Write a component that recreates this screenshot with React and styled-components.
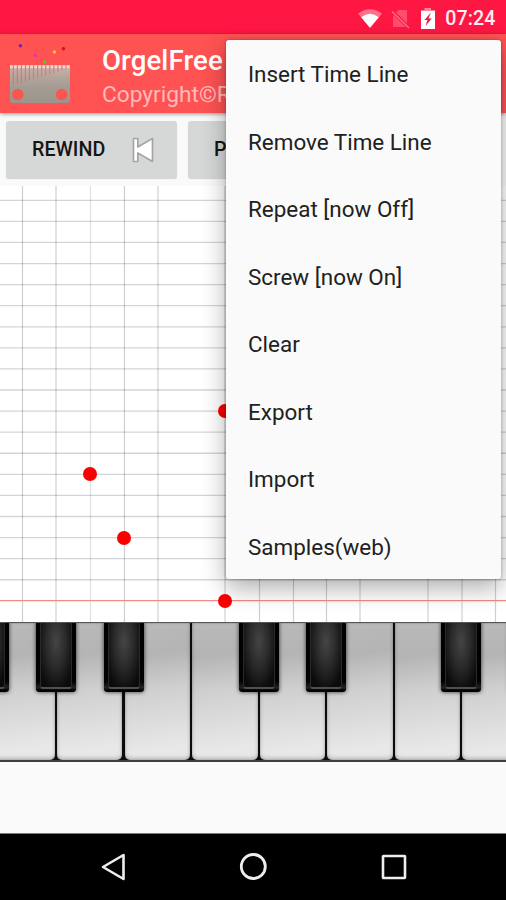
import React from 'react';
import styled, { createGlobalStyle } from 'styled-components';

const GlobalStyle = createGlobalStyle`
  * { box-sizing: border-box; }
  body { margin: 0; background: #fafafa; font-family: Roboto, "Liberation Sans", sans-serif; }
`;

const Screen = styled.div`
  position: relative;
  width: 506px;
  height: 900px;
  overflow: hidden;
  display: flex;
  flex-direction: column;
  background: #fafafa;
`;

const StatusBar = styled.header`
  flex: 0 0 34px;
  height: 34px;
  background: #ff1744;
  display: flex;
  align-items: center;
  justify-content: flex-end;
  padding: 3px 10.5px 0 0;
  color: #ffeef1;
  svg { display: block; }
`;

const StatusIcons = styled.div`
  display: flex;
  align-items: center;
  gap: 9.5px;
  margin-right: 9.5px;
`;

const Clock = styled.span`
  font-size: 19.6px;
  font-weight: 500;
  line-height: 29px;
  letter-spacing: 0.1px;
`;

const AppBar = styled.div`
  flex: 0 0 78.5px;
  background: #ff5252;
  display: flex;
  padding: 0 0 0 9px;
  box-shadow: 0 1px 4px rgba(0, 0, 0, 0.4);
  z-index: 1;
`;

const Logo = styled.svg`
  flex: none;
  display: block;
  width: 62px;
  height: 62px;
  margin-top: 9px;
`;

const Titles = styled.div`
  margin-left: 31px;
  padding-top: 11px;
  white-space: nowrap;
`;

const Title = styled.div`
  font-size: 27.6px;
  font-weight: 500;
  line-height: 32px;
  letter-spacing: 0.1px;
  color: #fff;
`;

const Subtitle = styled.div`
  font-size: 22.7px;
  line-height: 27px;
  margin-top: 4px;
  color: #ffbaba;
`;

const Toolbar = styled.div`
  flex: 0 0 73.5px;
  display: flex;
  gap: 11px;
  padding: 8.5px 6px 8px;
`;

const ToolButton = styled.button`
  flex: 0 0 171px;
  height: 57px;
  border: 0;
  border-radius: 3px;
  background: #d6d7d7;
  box-shadow: 0 1px 1px rgba(0, 0, 0, 0.16);
  display: flex;
  align-items: center;
  justify-content: space-between;
  padding: 1px 23px 0 26px;
  font: 500 19.7px/24px Roboto, "Liberation Sans", sans-serif;
  color: #151515;
  svg { display: block; }
`;

const Roll = styled.div`
  position: relative;
  flex: 0 0 436px;
  background: #fff;
  overflow: hidden;
`;

const GridLines = styled.svg`
  display: block;
  width: 506px;
  height: 436px;
`;

const Note = styled.i`
  position: absolute;
  left: ${p => p.$x - 7}px;
  top: ${p => p.$y - 7}px;
  width: 14px;
  height: 14px;
  border-radius: 50%;
  background: #fa0000;
`;

const Piano = styled.div`
  position: relative;
  flex: 0 0 140px;
  overflow: hidden;
  background: #0c0c0c;
  border-top: 1.5px solid #555;
  border-bottom: 2px solid #3e3e3e;
`;

const WhiteKeys = styled.div`
  display: flex;
  width: 540px;
  height: 100%;
  margin-left: -11.6px;
`;

const WhiteKey = styled.div`
  flex: 0 0 67.55px;
  padding: 0 1.1px;
  &::before {
    content: '';
    display: block;
    height: 100%;
    border-radius: 0 0 5px 5px;
    background: linear-gradient(172deg, #bababa 0%, #b4b4b4 24%, #cfcfcf 48%, #e8e8e8 90%);
    box-shadow: inset 0 0 1.5px rgba(0, 0, 0, 0.4), inset 0 -2px 4px rgba(0, 0, 0, 0.2);
  }
`;

const BlackKey = styled.div`
  position: absolute;
  top: -1px;
  left: ${p => p.$x - 20}px;
  width: 40px;
  height: 70px;
  padding: 0 4px 5px;
  border-radius: 0 0 3px 3px;
  background: linear-gradient(#020202 85%, #242424 94%, #030303 97%);
  box-shadow: 0 0 4px rgba(0, 0, 0, 0.75);
  &::before {
    content: '';
    display: block;
    height: 100%;
    border: 1.5px solid #292929;
    border-top: 0;
    border-bottom: 2px solid #505050;
    border-radius: 0 0 3px 3px;
    background: radial-gradient(ellipse 19px 50px at 50% 30%, #454545, #2b2b2b 50%, #0b0b0b 100%);
  }
`;

const Blank = styled.div`
  flex: 1;
`;

const NavBar = styled.nav`
  flex: 0 0 67px;
  background: #000;
  border-top: 1px solid #777;
  display: flex;
  align-items: center;
  justify-content: center;
  gap: 110.5px;
  svg { display: block; }
`;

const Menu = styled.ul`
  position: absolute;
  z-index: 5;
  top: 39.5px;
  left: 225.5px;
  width: 275.5px;
  height: 539.5px;
  margin: 0;
  padding: 0;
  list-style: none;
  background: #fafafa;
  border-radius: 3px;
  box-shadow: 0 9px 24px rgba(0, 0, 0, 0.32), 0 0 3px rgba(0, 0, 0, 0.3);
`;

const MenuItem = styled.li`
  height: 67.5px;
  display: flex;
  align-items: center;
  padding: 1.5px 0 0 22.5px;
  font-size: 22.45px;
  white-space: nowrap;
  color: #212121;
`;

const lines = [22.5, 56, 90.5, 124.5, 158, 225, 259.5, 293.5, 326.5, 360, 428, 462, 495.5];
const rows = Array.from({ length: 19 }, (_, i) => 14.3 + i * 21.08);
const notes = [[225, 225], [90, 288.3], [123.7, 351.5], [225, 414.7]];
const blackKeys = [-11.3, 56, 123.5, 258.5, 326, 461, 528.5];
const menu = ['Insert Time Line', 'Remove Time Line', 'Repeat [now Off]', 'Screw [now On]', 'Clear', 'Export', 'Import', 'Samples(web)'];
const sparks = [[10.9, 2.7, '#6c1fb5'], [25.7, 12.5, '#e733a5'], [44.9, 9, '#ffc51f'], [53.9, 5.8, '#d90f1c'], [35.2, 19, '#55d00e']];

function CombLogo() {
  return (
    <Logo viewBox="0 0 62 62">
      <defs>
        <linearGradient id="steel" x1="0" y1="0" x2="0" y2="1">
          <stop offset="0" stopColor="#cdb5ad" />
          <stop offset="0.3" stopColor="#b5a59d" />
          <stop offset="0.6" stopColor="#a39c92" />
          <stop offset="1" stopColor="#9b948a" />
        </linearGradient>
      </defs>
      <path d="M1 22.3H61V57Q61 60 58 60H4Q1 60 1 57Z" fill="url(#steel)" />
      {Array.from({ length: 14 }, (_, i) => (
        <path key={i} d={`M${4.3 + i * 4.05} 22.3V${42 - i * 1.2}`} stroke="#f0605a" strokeWidth="1.2" opacity="0.7" />
      ))}
      <path d="M1 23.8H61" stroke="#f4e0dc" strokeWidth="3" strokeDasharray="2.7 1.35" opacity="0.8" />
      <circle cx="8.8" cy="51.5" r="5.7" fill="#fb5550" />
      <circle cx="52.7" cy="51.5" r="5.7" fill="#fb5550" />
      {sparks.map(([x, y, c]) => <circle key={c} cx={x + 0.5} cy={y} r="1.7" fill={c} />)}
    </Logo>
  );
}

export default function App() {
  return (
    <>
      <GlobalStyle />
      <Screen>
        <StatusBar>
          <StatusIcons>
            <svg width="24" height="19" viewBox="0 0 24 19">
              <path d="M0 4.5Q12-4 24 4.5L12 19Z" fill="#ff7089" />
              <path d="M3.2 8.3Q12 1.2 20.8 8.3L12 18.8Z" fill="#fff" />
            </svg>
            <svg width="19" height="20" viewBox="0 0 19 20">
              <path d="M2 7L7.5 1H16V18H2Z" fill="#ff4e6e" />
              <path d="M1 2L18 19" stroke="#ff1744" strokeWidth="3.5" />
              <path d="M1 2.5L18 19" stroke="#fa6a84" strokeWidth="1.7" />
            </svg>
            <svg width="16" height="21" viewBox="0 0 16 21">
              <path d="M4.5 0H11V2H15V21H1V2H4.5Z" fill="#ff8398" />
              <path d="M1 3H15V21H1Z" fill="#fff" />
              <path d="M11 4.5L4.5 12H7.5L5.5 18L11.8 10.5H8.5Z" fill="#e9193f" />
            </svg>
          </StatusIcons>
          <Clock>07:24</Clock>
        </StatusBar>
        <AppBar>
          <CombLogo />
          <Titles>
            <Title>OrgelFree</Title>
            <Subtitle>Copyright©R</Subtitle>
          </Titles>
        </AppBar>
        <Toolbar>
          <ToolButton>
            REWIND
            <svg width="22" height="26" viewBox="0 0 22 26">
              <path d="M1.5 1.5H5.8V10L20.5 1.5V24.5L5.8 16V24.5H1.5Z" fill="#fff" stroke="#a5a5a5" strokeWidth="1.7" strokeLinejoin="round" />
            </svg>
          </ToolButton>
          <ToolButton>P</ToolButton>
        </Toolbar>
        <Roll>
          <GridLines viewBox="0 0 506 436">
            {lines.map(x => <path key={x} d={`M${x} 0V436`} stroke="#000" strokeOpacity={x === 90.5 ? 0.12 : 0.19} strokeWidth="1.2" />)}
            {rows.map(y => <path key={y} d={`M0 ${y}H506`} stroke="#000" strokeOpacity="0.17" strokeWidth="1.3" />)}
            <path d="M0 414.6H506" stroke="#f58a8a" strokeWidth="1.4" />
          </GridLines>
          {notes.map(([x, y]) => <Note key={y} $x={x} $y={y} />)}
        </Roll>
        <Piano>
          <WhiteKeys>{Array.from({ length: 8 }, (_, i) => <WhiteKey key={i} />)}</WhiteKeys>
          {blackKeys.map(x => <BlackKey key={x} $x={x} />)}
        </Piano>
        <Blank />
        <NavBar>
          <svg width="30" height="30" viewBox="0 0 30 30">
            <path d="M25.5 3V27L5 15Z" fill="none" stroke="#eee" strokeWidth="2.6" strokeLinejoin="round" />
          </svg>
          <svg width="30" height="30" viewBox="0 0 30 30">
            <circle cx="15.3" cy="14.5" r="12" fill="none" stroke="#eee" strokeWidth="2.8" />
          </svg>
          <svg width="30" height="30" viewBox="0 0 30 30">
            <rect x="4" y="4" width="22" height="22" rx="0.5" fill="none" stroke="#eee" strokeWidth="2.6" />
          </svg>
        </NavBar>
        <Menu>{menu.map(t => <MenuItem key={t}>{t}</MenuItem>)}</Menu>
      </Screen>
    </>
  );
}
